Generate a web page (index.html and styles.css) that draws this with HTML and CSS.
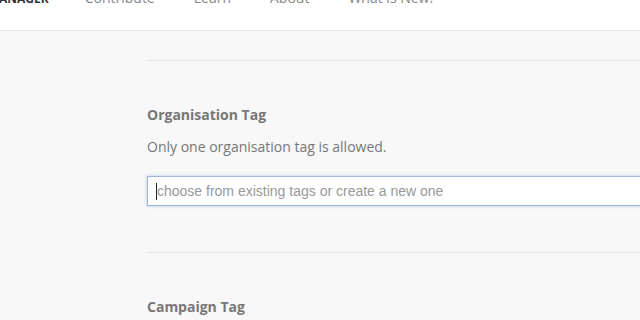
FILE: index.html
```html
<!DOCTYPE html>
<html lang="en">
<head>
  <meta charset="UTF-8">
  <title>Tag Manager</title>
  <link rel="stylesheet" href="styles.css">
</head>
<body>
  <nav class="topnav">
    <div class="topnav-row">
      <span class="brand">ANAGER</span>
      <a class="nav-link" href="#">Contribute</a>
      <a class="nav-link" href="#">Learn</a>
      <a class="nav-link" href="#">About</a>
      <a class="nav-link" href="#">What is New!</a>
    </div>
  </nav>
  <main class="content">
    <hr class="divider">
    <section class="tag-section">
      <h4 class="tag-title">Organisation Tag</h4>
      <p class="tag-help">Only one organisation tag is allowed.</p>
      <div class="tag-field">
        <input class="tag-input" type="text" placeholder="choose from existing tags or create a new one">
      </div>
    </section>
    <hr class="divider">
    <section class="tag-section">
      <h4 class="tag-title">Campaign Tag</h4>
    </section>
  </main>
</body>
</html>
```

FILE: styles.css
```css
html, body {
  margin: 0;
  height: 100%;
  overflow: hidden;
}
body {
  background: #f8f8f8;
  font-family: "Open Sans", "DejaVu Sans", sans-serif;
  color: #777;
}
.topnav {
  height: 30px;
  background: #fff;
  border-bottom: 1px solid #e6e6e6;
  overflow: hidden;
  display: flex;
  align-items: flex-end;
}
.topnav-row {
  display: flex;
  align-items: baseline;
  gap: 39px;
  padding-bottom: 21px;
  line-height: 20px;
  font-size: 14px;
}
.brand {
  font-size: 12px;
  font-weight: 700;
  color: #333;
  margin-left: -1px;
  margin-right: -3px;
}
.nav-link {
  color: #888;
  text-decoration: none;
}
.content {
  padding-left: 147px;
  width: 560px;
}
.divider {
  border: 0;
  border-top: 1px solid #e4e4e4;
  margin: 29px 0 0;
}
.tag-section {
  padding-top: 44px;
  padding-bottom: 17px;
}
.tag-title {
  margin: 0;
  font-size: 14px;
  line-height: 20px;
  font-weight: 700;
  color: #777;
}
.tag-help {
  margin: 12px 0 0;
  font-size: 14px;
  line-height: 20px;
  color: #777;
}
.tag-field {
  position: relative;
  margin-top: 19px;
}
.tag-field::before {
  content: "";
  position: absolute;
  left: 9px;
  top: 7px;
  width: 1px;
  height: 17px;
  background: #222;
}
.tag-input {
  display: block;
  box-sizing: border-box;
  width: 560px;
  height: 30px;
  padding: 0 9px;
  border: 1px solid #9fb8d6;
  background: #fff;
  box-shadow: 0 0 3px rgba(82, 140, 205, 0.45);
  font-family: "Liberation Sans", Arial, sans-serif;
  font-size: 14px;
  color: #333;
  outline: none;
}
.tag-input::placeholder {
  color: #999;
}
```
